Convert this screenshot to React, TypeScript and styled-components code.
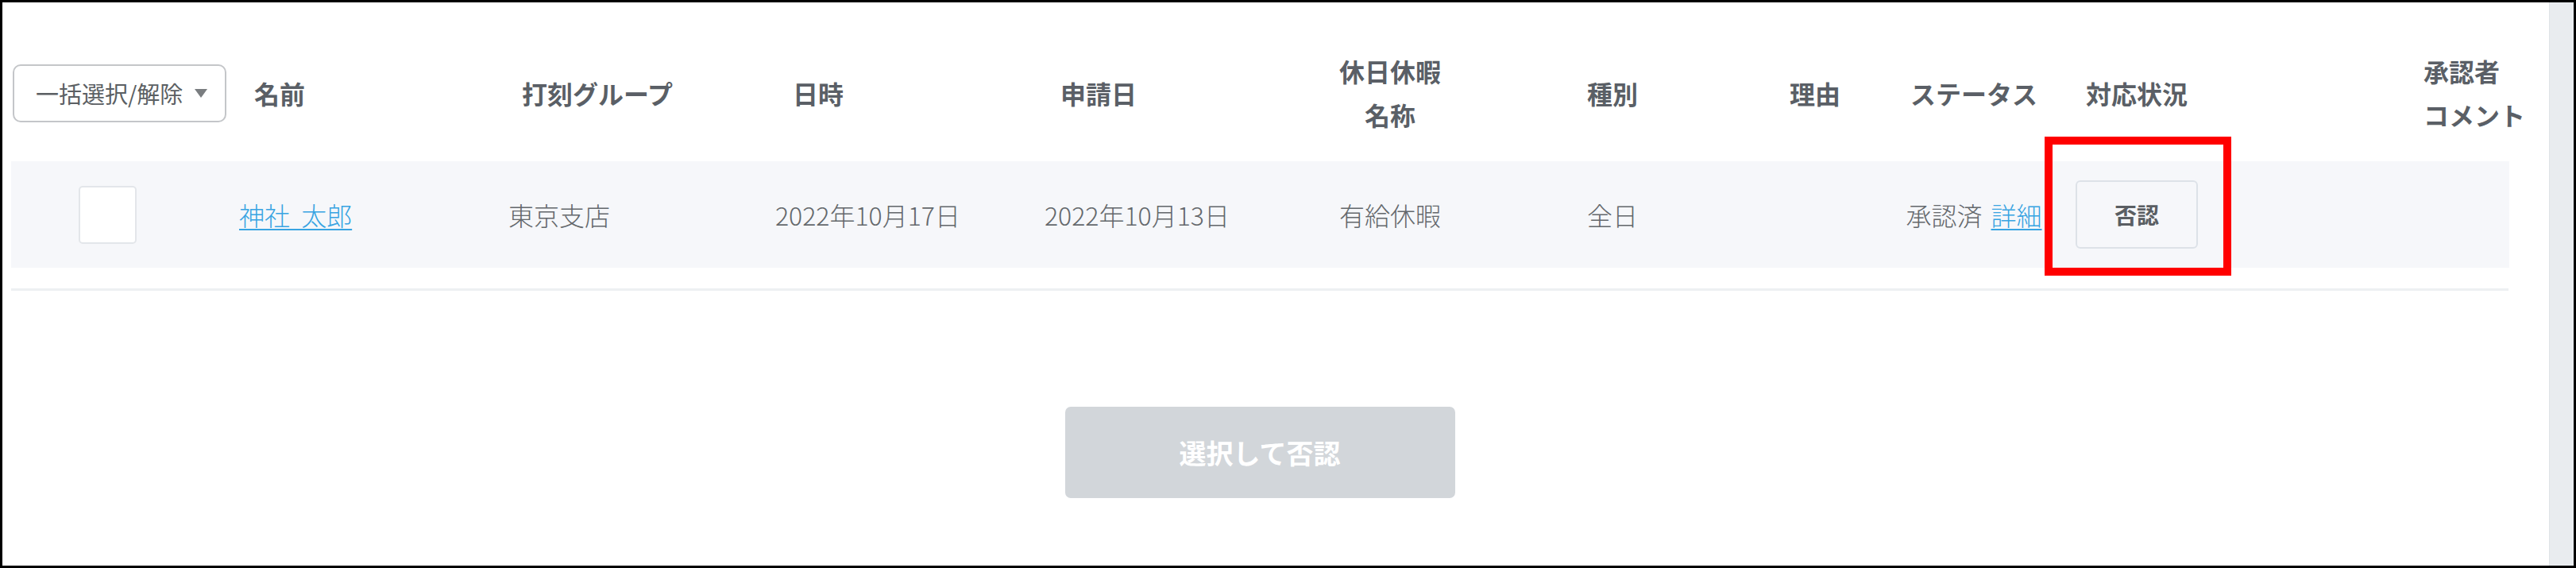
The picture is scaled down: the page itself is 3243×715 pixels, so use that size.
import React from "react";
import styled, { createGlobalStyle } from "styled-components";

const GlobalStyle = createGlobalStyle`
  html, body {
    margin: 0;
    padding: 0;
    background: #ffffff;
  }
  body {
    font-family: "Noto Sans CJK JP", "Noto Sans", sans-serif;
  }
`;

type Column = {
  key: string;
  width: number;
  align: "left" | "center";
  headPad: number;
  bodyPad: number;
};

const columns: Column[] = [
  { key: "select", width: 276, align: "left", headPad: 2, bodyPad: 85 },
  { key: "name", width: 330, align: "left", headPad: 30, bodyPad: 11 },
  { key: "group", width: 340, align: "left", headPad: 37, bodyPad: 20 },
  { key: "date", width: 340, align: "left", headPad: 38, bodyPad: 16 },
  { key: "applied", width: 340, align: "left", headPad: 35, bodyPad: 15 },
  { key: "holiday", width: 220, align: "center", headPad: 0, bodyPad: 0 },
  { key: "kind", width: 340, align: "center", headPad: 0, bodyPad: 0 },
  { key: "reason", width: 170, align: "center", headPad: 0, bodyPad: 0 },
  { key: "status", width: 230, align: "center", headPad: 0, bodyPad: 0 },
  { key: "action", width: 180, align: "center", headPad: 0, bodyPad: 0 },
  { key: "comment", width: 378, align: "left", headPad: 271, bodyPad: 0 },
];

const template = columns.map((c) => `${c.width}px`).join(" ");

const Frame = styled.div`
  position: relative;
  box-sizing: border-box;
  width: 3243px;
  height: 715px;
  border: 3px solid #000000;
  display: flex;
  overflow: hidden;
  background: #ffffff;
`;

const Main = styled.main`
  flex: 1;
  padding: 44px 50px 0 11px;
  display: flex;
  flex-direction: column;
`;

const ScrollTrack = styled.div`
  width: 30px;
  background: #e9ecef;
  border-left: 1px solid #dfe3e7;
`;

const Row = styled.div`
  display: grid;
  grid-template-columns: ${template};
  align-items: center;
`;

const HeadRow = styled(Row)`
  height: 140px;
`;

const BodyRow = styled(Row)`
  height: 134px;
  margin-top: 16px;
  background: #f6f7fa;
`;

const HeadCell = styled.div<{ $align: string; $pad: number }>`
  text-align: ${(p) => p.$align};
  padding-left: ${(p) => p.$pad}px;
  font-size: 32px;
  font-weight: 700;
  line-height: 55px;
  color: #5a5f66;
  white-space: nowrap;
`;

const BodyCell = styled.div<{ $align: string; $pad: number }>`
  display: flex;
  align-items: center;
  justify-content: ${(p) => (p.$align === "center" ? "center" : "flex-start")};
  padding-left: ${(p) => p.$pad}px;
  font-size: 32px;
  font-weight: 300;
  color: #64686c;
  white-space: nowrap;
`;

const BulkSelect = styled.button`
  display: flex;
  align-items: center;
  box-sizing: border-box;
  width: 269px;
  height: 73px;
  padding: 0 0 0 27px;
  border: 2px solid #c4c6c9;
  border-radius: 10px;
  background: #ffffff;
  font-family: inherit;
  font-size: 29px;
  font-weight: 400;
  color: #5b5f63;
  cursor: pointer;
`;

const Caret = styled.span`
  margin-left: 15px;
  width: 0;
  height: 0;
  border-left: 8px solid transparent;
  border-right: 8px solid transparent;
  border-top: 11px solid #7a7d80;
`;

const CheckBox = styled.span`
  display: block;
  box-sizing: border-box;
  width: 73px;
  height: 73px;
  background: #ffffff;
  border: 2px solid #e3e6ea;
  border-radius: 5px;
`;

const Link = styled.a`
  color: #38a4e2;
  text-decoration: underline;
  text-underline-offset: 4px;
  text-decoration-thickness: 2px;
  cursor: pointer;
`;

const Status = styled.span`
  display: inline-flex;
  gap: 11px;
`;

const RejectButton = styled.button`
  box-sizing: border-box;
  width: 154px;
  height: 86px;
  background: #f6f7fa;
  border: 2px solid #dde2e8;
  border-radius: 6px;
  font-family: inherit;
  font-size: 28px;
  font-weight: 700;
  color: #5a5e63;
  cursor: pointer;
`;

const Divider = styled.div`
  height: 3px;
  margin-top: 26px;
  background: #edf0f2;
  width: 3144px;
`;

const Footer = styled.div`
  display: flex;
  justify-content: center;
  width: 3144px;
  margin-top: 146px;
`;

const BulkReject = styled.button`
  width: 491px;
  height: 115px;
  border: none;
  border-radius: 7px;
  background: #d2d6da;
  color: #ffffff;
  font-family: inherit;
  font-size: 34px;
  font-weight: 700;
`;

const Highlight = styled.div`
  position: absolute;
  left: 2571px;
  top: 169px;
  box-sizing: border-box;
  width: 235px;
  height: 175px;
  border: 10px solid #ff0000;
  pointer-events: none;
`;

const headers: Record<string, React.ReactNode> = {
  name: "名前",
  group: "打刻グループ",
  date: "日時",
  applied: "申請日",
  holiday: (
    <>
      休日休暇
      <br />
      名称
    </>
  ),
  kind: "種別",
  reason: "理由",
  status: "ステータス",
  action: "対応状況",
  comment: (
    <>
      承認者
      <br />
      コメント
    </>
  ),
};

const record: Record<string, React.ReactNode> = {
  select: <CheckBox />,
  name: <Link>神社&nbsp;&nbsp;太郎</Link>,
  group: "東京支店",
  date: "2022年10月17日",
  applied: "2022年10月13日",
  holiday: "有給休暇",
  kind: "全日",
  reason: "",
  status: (
    <Status>
      <span>承認済</span>
      <Link>詳細</Link>
    </Status>
  ),
  action: <RejectButton>否認</RejectButton>,
  comment: "",
};

export default function App() {
  return (
    <>
      <GlobalStyle />
      <Frame>
        <Main>
          <HeadRow>
            {columns.map((c) => (
              <HeadCell key={c.key} $align={c.align} $pad={c.headPad}>
                {c.key === "select" ? (
                  <BulkSelect>
                    一括選択/解除
                    <Caret />
                  </BulkSelect>
                ) : (
                  headers[c.key]
                )}
              </HeadCell>
            ))}
          </HeadRow>
          <BodyRow>
            {columns.map((c) => (
              <BodyCell key={c.key} $align={c.align} $pad={c.bodyPad}>
                {record[c.key]}
              </BodyCell>
            ))}
          </BodyRow>
          <Divider />
          <Footer>
            <BulkReject>選択して否認</BulkReject>
          </Footer>
        </Main>
        <ScrollTrack />
        <Highlight />
      </Frame>
    </>
  );
}
